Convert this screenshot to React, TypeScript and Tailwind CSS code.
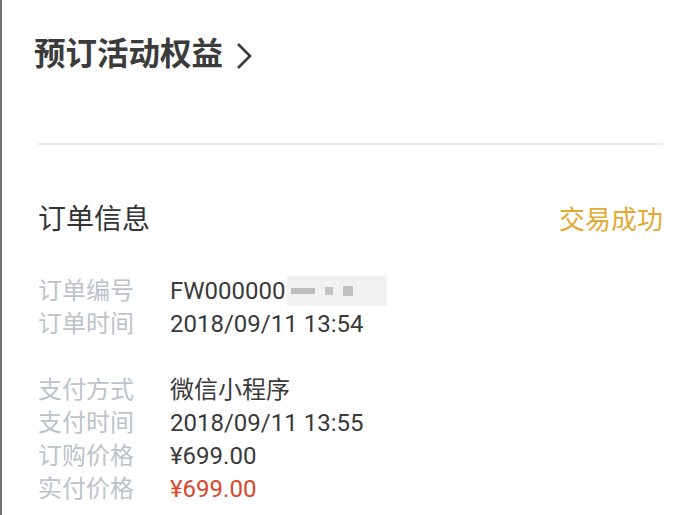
import React from "react";

const font = { fontFamily: '"Roboto", "Noto Sans CJK SC", sans-serif' };

function Row({ label, children }: { label: string; children: React.ReactNode }) {
  return (
    <div className="flex h-[33px] items-center">
      <div className="w-[132px] shrink-0 text-[#bcc3cb]">{label}</div>
      <div className="flex items-center text-[#3a3a3a]">{children}</div>
    </div>
  );
}

export default function App() {
  return (
    <div
      className="w-[700px] h-[515px] overflow-hidden bg-white border-l-2 border-[#727272]"
      style={font}
    >
      <div className="pl-[36px] pr-[37px]">
        <div className="mt-[35px] flex h-[40px] items-center gap-[12px] -ml-[4px] text-[31.5px] font-bold text-[#3b3b3b]">
          <span>预订活动权益</span>
          <svg width="18" height="28" viewBox="0 0 18 28" className="mt-[2px]">
            <polyline points="3,2 15,14 3,26" fill="none" stroke="#3b3b3b" strokeWidth="2.6" />
          </svg>
        </div>
        <div className="mt-[68px] h-[2px] bg-[#ebebeb]" />
        <div className="mt-[55px] flex h-[40px] items-center justify-between">
          <span className="text-[28px] text-[#333333]">订单信息</span>
          <span className="text-[26px] text-[#e2aa33]">交易成功</span>
        </div>
        <div className="mt-[34px] text-[24px]">
          <Row label="订单编号">
            <span>FW000000</span>
            <span className="ml-[1px] flex h-[30px] w-[100px] items-center gap-[10px] bg-[#f1f1f1] px-[4px]">
              <span className="h-[6px] w-[24px] bg-[#bdbdbd]" />
              <span className="h-[8px] w-[8px] bg-[#c4c4c4]" />
              <span className="h-[10px] w-[10px] bg-[#c0c0c0]" />
            </span>
          </Row>
          <Row label="订单时间">2018/09/11 13:54</Row>
          <div className="h-[33px]" />
          <Row label="支付方式">微信小程序</Row>
          <Row label="支付时间">2018/09/11 13:55</Row>
          <Row label="订购价格">¥699.00</Row>
          <Row label="实付价格">
            <span className="text-[#d9472c]">¥699.00</span>
          </Row>
        </div>
      </div>
    </div>
  );
}
